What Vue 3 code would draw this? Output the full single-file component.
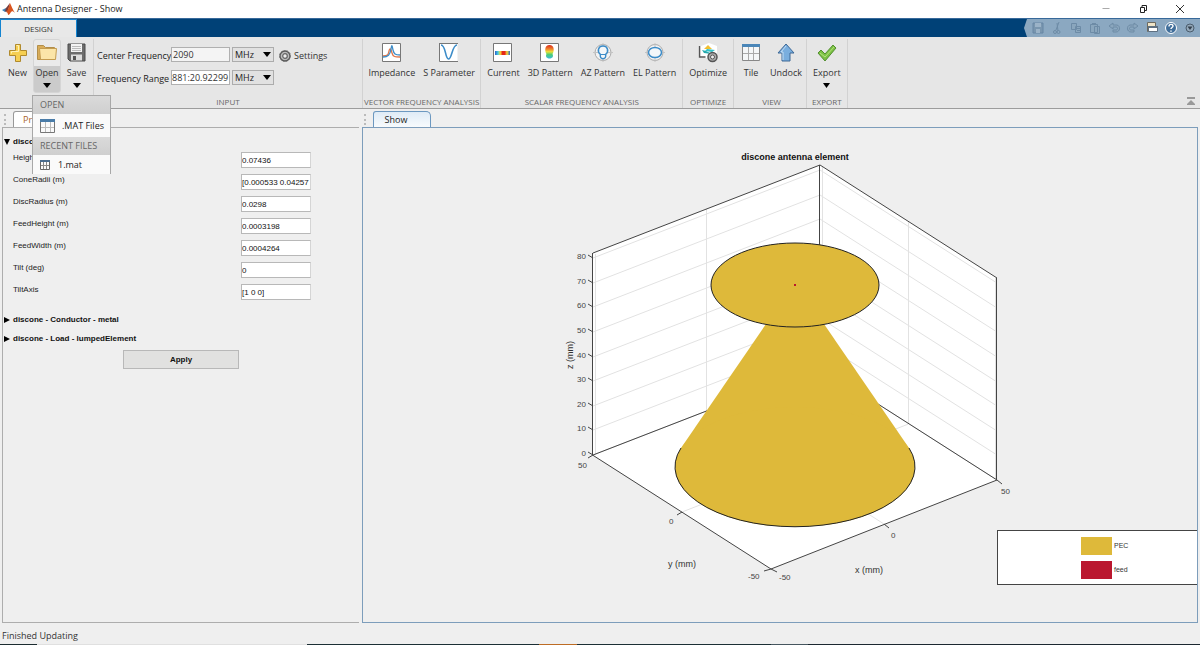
<script setup>
import { ref } from 'vue'

const centerFrequency = ref('2090')
const frequencyRange = ref('881:20.92299')

const properties = ref([
  { id: 'height', label: 'Height (m)', value: '0.07436' },
  { id: 'cone-radii', label: 'ConeRadii (m)', value: '[0.000533 0.04257' },
  { id: 'disc-radius', label: 'DiscRadius (m)', value: '0.0298' },
  { id: 'feed-height', label: 'FeedHeight (m)', value: '0.0003198' },
  { id: 'feed-width', label: 'FeedWidth (m)', value: '0.0004264' },
  { id: 'tilt', label: 'Tilt (deg)', value: '0' },
  { id: 'tilt-axis', label: 'TiltAxis', value: '[1 0 0]' }
])

// Height levels of the z axis, in millimetres, with their place on the left edge.
const levels = [0, 10, 20, 30, 40, 50, 60, 70, 80].map((mm) => ({
  mm,
  y: Math.round(455 - mm * 2.46)
}))
</script>

<template>
  <div class="window">
    <header class="titlebar">
      <svg class="logo" width="13" height="12" viewBox="0 0 13 12">
        <path d="M0 7 L4 5 L6 7 L3 9Z" fill="#3f7fb5" />
        <path d="M4 5 L8 0 L6 8 L4 9 L3 8Z" fill="#7a3b3b" />
        <path d="M8 0 C9 2 11 7 13 10 C11 8 10 8 9 9 C8 11 7 12 6 12 C6 10 5 9 4 9 C6 8 7 3 8 0Z" fill="#d9541e" />
      </svg>
      <span class="title">Antenna Designer - Show</span>
      <div class="window-controls">
        <button aria-label="Minimize"><svg width="10" height="10" viewBox="0 0 10 10"><path d="M1.500 4.500h7" stroke="#aaa" fill="none" /></svg></button>
        <button aria-label="Restore"><svg width="10" height="10" viewBox="0 0 10 10"><path d="M2.500 3.500h4v5h-4zM4 3V1.500h4.500v5H7" stroke="#222" fill="none" /></svg></button>
        <button aria-label="Close"><svg width="10" height="10" viewBox="0 0 10 10"><path d="M1 1l8 8M9 1l-8 8" stroke="#333" fill="none" /></svg></button>
      </div>
    </header>

    <nav class="tabstrip">
      <button class="design-tab">DESIGN</button>
      <div class="quick-access">
        <button aria-label="Save"><svg class="dim" width="14" height="14" viewBox="0 0 14 14"><path d="M2 2h10v10H2z" fill="#7591ab" stroke="#5f7f9c" /><path d="M4 2h6v4H4zM5 8h4v4H5z" fill="#9fb6ca" /></svg></button>
        <button aria-label="Cut"><svg class="dim" width="14" height="14" viewBox="0 0 14 14"><g fill="none" stroke="#66849f"><path d="M9 1L6 9M7 2l1 8" /><circle cx="5" cy="11" r="1.500" /><circle cx="8.500" cy="11" r="1.500" /></g></svg></button>
        <button aria-label="Copy"><svg class="dim" width="14" height="14" viewBox="0 0 14 14"><path d="M2.500 2.500h5v6h-5zM6.500 5.500h5v6h-5z" fill="#8aa5bc" stroke="#66849f" /><path d="M8 7.500h3M8 9.500h3" stroke="#66849f" /></svg></button>
        <button aria-label="Paste"><svg class="dim" width="14" height="14" viewBox="0 0 14 14"><path d="M2.500 3.500h7v8h-7zM6.500 5.500h5v7h-5z" fill="#8aa5bc" stroke="#66849f" /><path d="M4 2h4v2H4z" fill="#66849f" /></svg></button>
        <button aria-label="Undo"><svg class="dim" width="14" height="14" viewBox="0 0 14 14"><path d="M2 5l4-3v2h4c4 1 3 7-1 7H6V9h3c2 0 2-3 0-3H6v2z" fill="#8aa5bc" stroke="#66849f" /></svg></button>
        <button aria-label="Redo"><svg class="dim" width="14" height="14" viewBox="0 0 14 14"><path d="M12 5L8 2v2H4c-4 1-3 7 1 7h3V9H5c-2 0-2-3 0-3h3v2z" fill="#8aa5bc" stroke="#66849f" /></svg></button>
        <button aria-label="Switch windows"><svg width="14" height="14" viewBox="0 0 14 14"><path d="M2.500 1.500h8v9h-8z" fill="#eee4c8" stroke="#6d6a60" /><path d="M3.500 5.500h9v5h-9z" fill="#fff" stroke="#5d6f80" /><path d="M3 5h10v2H3z" fill="#5d6f80" /></svg></button>
        <button aria-label="Help"><svg width="14" height="14" viewBox="0 0 14 14"><circle cx="7" cy="7" r="5.500" fill="#416f9b" stroke="#fff" /><path d="M5 5.500c0-3 4-2.500 4-.5C9 6.500 7 6.500 7 8M7 9.500v1.200" fill="none" stroke="#fff" stroke-width="1.400" /></svg></button>
        <button aria-label="More"><svg width="14" height="14" viewBox="0 0 14 14"><circle cx="7" cy="7" r="4" fill="#94a9bb" stroke="#4a5c6c" /><path d="M4.500 5.500h5L7 9z" fill="#34424e" /></svg></button>
      </div>
    </nav>

    <section class="ribbon">
      <div class="group file-group">
        <div class="tools">
          <button class="tool">
            <svg width="20" height="20" viewBox="0 0 20 20"><path d="M7.500 1.500h5v6h6v5h-6v6h-5v-6h-6v-5h6z" fill="#f6cf52" stroke="#b08a2e" /><path d="M8.500 2.500h2v6h-7v2" fill="none" stroke="#fff2b8" /></svg>
            <span>New</span>
          </button>
          <button class="tool open">
            <svg width="20" height="20" viewBox="0 0 20 20"><path d="M.5 2.500h6l2 2h9v12H.5z" fill="#d9ad5a" stroke="#b28e4a" /><path d="M2.500 5.500h17l-1 11h-15z" fill="#fbe5a8" stroke="#c49c50" /></svg>
            <span>Open</span>
            <svg class="caret" width="8" height="5" viewBox="0 0 8 5"><path d="M0 0h8L4 5z" /></svg>
          </button>
          <button class="tool">
            <svg width="20" height="20" viewBox="0 0 20 20"><path d="M1 1h17v17H3l-2-2z" fill="#6c6c6c" stroke="#4b4b4b" /><path d="M4 1h11v8H4z" fill="#f4f4f4" /><path d="M5 3.500h9M5 5.500h9M5 7.500h9" stroke="#bbb" /><path d="M4 11.500h11v6H4z" fill="#ddd" /><path d="M6 13h3v4H6z" fill="#555" /></svg>
            <span>Save</span>
            <svg class="caret" width="8" height="5" viewBox="0 0 8 5"><path d="M0 0h8L4 5z" /></svg>
          </button>
        </div>
      </div>

      <div class="group input-group">
        <div class="input-body">
          <form class="frequency" @submit.prevent>
            <label for="center">Center Frequency</label>
            <input id="center" v-model="centerFrequency" class="muted" />
            <div class="unit">
              <select aria-label="Center frequency unit"><option>MHz</option><option>GHz</option></select>
              <svg width="8" height="5" viewBox="0 0 8 5"><path d="M0 0h8L4 5z" /></svg>
            </div>
            <label for="range">Frequency Range</label>
            <input id="range" v-model="frequencyRange" />
            <div class="unit">
              <select aria-label="Frequency range unit"><option>MHz</option><option>GHz</option></select>
              <svg width="8" height="5" viewBox="0 0 8 5"><path d="M0 0h8L4 5z" /></svg>
            </div>
          </form>
          <button class="settings">
            <svg width="12" height="12" viewBox="0 0 12 12"><circle cx="6" cy="6" r="5" fill="#bbb" stroke="#555" stroke-width="1.300" /><circle cx="6" cy="6" r="5.500" fill="none" stroke="#777" stroke-dasharray="1.500 1.500" /><circle cx="6" cy="6" r="2.300" fill="#eee" stroke="#666" stroke-width="1.200" /></svg>
            <span>Settings</span>
          </button>
        </div>
        <h2>INPUT</h2>
      </div>

      <div class="group">
        <div class="tools">
          <button class="tool">
            <svg width="20" height="20" viewBox="0 0 20 20"><path d="M.5.5h18v18H.5z" fill="#fff" stroke="#777" /><path d="M1 13c5 0 5-1 6-5s2-2 3 2 3 4 8 4" fill="none" stroke="#e0764a" stroke-width="1.300" /><path d="M1 14c5 0 7-2 8-8 1-6 1-3 2 1s2 5 7 5" fill="none" stroke="#3c8cc8" stroke-width="1.300" /></svg>
            <span>Impedance</span>
          </button>
          <button class="tool">
            <svg width="20" height="20" viewBox="0 0 20 20"><path d="M.5.5h18v18H.5z" fill="#fff" /><path d="M.5 0v18.500H19M1 .5h18" fill="none" stroke="#777" /><path d="M2 2c5 0 4 14 7.500 14S13 2 18 2" fill="none" stroke="#3c8cc8" stroke-width="1.600" /></svg>
            <span>S Parameter</span>
          </button>
        </div>
        <h2>VECTOR FREQUENCY ANALYSIS</h2>
      </div>

      <div class="group scalar-group">
        <div class="tools">
          <button class="tool">
            <svg width="20" height="20" viewBox="0 0 20 20"><defs><linearGradient id="current"><stop offset="0" stop-color="#2a62cc" /><stop offset=".2" stop-color="#48cde0" /><stop offset=".35" stop-color="#f4dc38" /><stop offset=".5" stop-color="#e52718" /><stop offset=".65" stop-color="#e52718" /><stop offset=".8" stop-color="#f4dc38" /><stop offset="1" stop-color="#2a62cc" /></linearGradient></defs><path d="M.5.5h18v18H.5z" fill="#fff" stroke="#777" /><path d="M2 8h15v4H2z" fill="url(#current)" /></svg>
            <span>Current</span>
          </button>
          <button class="tool">
            <svg width="20" height="20" viewBox="0 0 20 20"><defs><linearGradient id="lobe" x2="0" y2="1"><stop offset="0" stop-color="#d92a1c" /><stop offset=".3" stop-color="#f0822c" /><stop offset=".5" stop-color="#ecdf38" /><stop offset=".7" stop-color="#51ce70" /><stop offset="1" stop-color="#36b8dc" /></linearGradient></defs><path d="M.5.5h18v18H.5z" fill="#fff" stroke="#777" /><path d="M9.500 2c5 0 5 6 3 9 3 6-9 6-6 0-2-3-2-9 3-9z" fill="url(#lobe)" /></svg>
            <span>3D Pattern</span>
          </button>
          <button class="tool">
            <svg width="20" height="20" viewBox="0 0 20 20"><circle cx="10" cy="9.500" r="8" fill="#f3f3f3" stroke="#aaa" /><path d="M10 0v19M0 9.500h20" stroke="#c4c4c4" /><path d="M7.500 11.500C3.500 8 5.500 3 10 3s6.500 5 2.500 8.500c2 5.500-7 5.500-5 0z" fill="#f3f7fa" stroke="#3c8cc8" stroke-width="1.500" /><path d="M7.500 11.500h5" stroke="#3c8cc8" /></svg>
            <span>AZ Pattern</span>
          </button>
          <button class="tool">
            <svg width="20" height="20" viewBox="0 0 20 20"><circle cx="10" cy="9.500" r="8" fill="#f3f3f3" stroke="#aaa" /><path d="M10 0v19M0 9.500h20" stroke="#c4c4c4" /><ellipse cx="10" cy="9.500" rx="6.500" ry="5" fill="#f3f7fa" stroke="#3c8cc8" stroke-width="1.500" /></svg>
            <span>EL Pattern</span>
          </button>
        </div>
        <h2>SCALAR FREQUENCY ANALYSIS</h2>
      </div>

      <div class="group optimize-group">
        <div class="tools">
          <button class="tool">
            <svg width="20" height="20" viewBox="0 0 20 20"><path d="M3 3l8-3 8 3v12H3z" fill="#fff" /><path d="M1.500 3v11h6" fill="none" stroke="#555" stroke-width="1.300" /><path d="M4 7l4 1 6 3-8-1z" fill="#25a9ad" /><path d="M10 2l4 4H6z" fill="#f1bf32" /><path d="M9 6l8 1-3 2-7-1z" fill="#32c1c9" /><circle cx="14.500" cy="14" r="4.500" fill="#aaa" stroke="#555" stroke-width="1.500" /><circle cx="14.500" cy="14" r="2" fill="#eee" stroke="#555" /></svg>
            <span>Optimize</span>
          </button>
        </div>
        <h2>OPTIMIZE</h2>
      </div>

      <div class="group view-group">
        <div class="tools">
          <button class="tool">
            <svg width="20" height="20" viewBox="0 0 20 20"><path d="M1.500 1.500h17v16h-17z" fill="#f5f7f8" stroke="#888" /><path d="M1 1h18v3H1z" fill="#4a86b8" /><path d="M7.500 4v13M12.500 4v13M2 10.500h16" stroke="#aaa" /></svg>
            <span>Tile</span>
          </button>
          <button class="tool">
            <svg width="20" height="20" viewBox="0 0 20 20"><path d="M10 1l8 9h-4v8H6v-8H2z" fill="#79aede" stroke="#3e6896" /><path d="M10 3L5 9h2v8" fill="none" stroke="#c4ddf3" /></svg>
            <span>Undock</span>
          </button>
        </div>
        <h2>VIEW</h2>
      </div>

      <div class="group export-group">
        <div class="tools">
          <button class="tool">
            <svg width="20" height="20" viewBox="0 0 20 20"><path d="M1 10l3-3 4 4 8-9 3 3L8 18z" fill="#7bc142" stroke="#538f31" /><path d="M3 10l5 4 9-10" fill="none" stroke="#b3e07e" /></svg>
            <span>Export</span>
            <svg class="caret" width="7" height="5" viewBox="0 0 7 5"><path d="M0 0h7L3.500 5z" /></svg>
          </button>
        </div>
        <h2>EXPORT</h2>
      </div>

      <button class="collapse" aria-label="Collapse ribbon"><svg width="8" height="9" viewBox="0 0 8 9"><path d="M0 0h8v2H0zM4 3l4 4v1H0V7z" fill="#999" /></svg></button>

      <div class="open-menu">
        <h3>OPEN</h3>
        <button>
          <svg width="15" height="14" viewBox="0 0 15 14"><path d="M.5.500h14v13H.5z" fill="#fafafa" stroke="#777" /><path d="M0 0h15v3H0z" fill="#4a7ca8" /><path d="M5.500 3v10M10.500 3v10M1 8.500h13" stroke="#bbb" /></svg>
          .MAT Files
        </button>
        <h3>RECENT FILES</h3>
        <button class="recent">
          <svg width="10" height="10" viewBox="0 0 10 10"><path d="M.5.500h9v9H.5z" fill="#fafafa" stroke="#666" /><path d="M0 0h10v2H0z" fill="#4a6c8e" /><path d="M3.500 2v7M6.500 2v7M1 5.500h8" stroke="#888" /></svg>
          1.mat
        </button>
      </div>
    </section>

    <main class="workspace">
      <section class="pane properties-pane">
        <div class="pane-tabs"><i class="grip"></i><button class="pane-tab">Properties</button></div>
        <div class="pane-body">
          <form @submit.prevent>
            <button class="expander" type="button"><svg width="6" height="6" viewBox="0 0 6 6"><path d="M0 0h6L3 6z" /></svg>discone</button>
            <div class="fields">
              <div v-for="p in properties" :key="p.id" class="field">
                <label :for="p.id">{{ p.label }}</label>
                <input :id="p.id" v-model="p.value" />
              </div>
            </div>
            <button class="expander" type="button"><svg width="6" height="6" viewBox="0 0 6 6"><path d="M0 0v6l6-3z" /></svg>discone - Conductor - metal</button>
            <button class="expander" type="button"><svg width="6" height="6" viewBox="0 0 6 6"><path d="M0 0v6l6-3z" /></svg>discone - Load - lumpedElement</button>
            <button class="apply">Apply</button>
          </form>
        </div>
      </section>

      <section class="pane show-pane">
        <div class="pane-tabs"><i class="grip"></i><button class="pane-tab">Show</button></div>
        <div class="pane-body">
          <svg class="plot" viewBox="363 128 834 494">
            <path d="M593 253L820 165L997 278V480L771 569L593 455Z" fill="#fff" />
            <g class="grid">
              <path v-for="l in levels" :key="l.mm" :d="`M593 ${l.y}L820 ${l.y - 88}L997 ${l.y + 25}`" />
              <path d="M595.500 254V455M706.500 209V411L884 524M908.500 222V424L682 512M822.500 167V367M995.500 278V479" />
            </g>
            <g class="axis">
              <path d="M593 253L820 165L997 278M819.500 165V367M593 455L820 367L997 480M996.500 278V480M592.500 253V455L771 569L997 480" />
              <path v-for="l in levels" :key="l.mm" :d="`M593 ${l.y}l-5 -3`" />
              <path d="M593 455l-5 3M682 512l-5 3M771 569l-7 2M771 569l6 3M884 524l5 4M997 480l5 4" />
            </g>
            <path d="M766 324H824L909 448L911 480H678L681 448Z" fill="#deb93a" />
            <ellipse cx="795" cy="467" rx="120" ry="60" fill="#deb93a" />
            <path d="M681 448A120 60 0 1 0 909 448" class="outline" />
            <ellipse cx="795" cy="285" rx="84" ry="42" fill="#deb93a" class="rim" />
            <path d="M794 284h2v2h-2z" fill="#ba172f" />
            <g class="ticks">
              <text v-for="l in levels" :key="l.mm" x="586" :y="l.y + 1" text-anchor="end">{{ l.mm }}</text>
              <text x="578" y="468">50</text>
              <text x="669" y="524">0</text>
              <text x="748" y="579">-50</text>
              <text x="779" y="580">-50</text>
              <text x="891" y="538">0</text>
              <text x="1001" y="494">50</text>
            </g>
            <g class="axis-names">
              <text x="668" y="567">y (mm)</text>
              <text x="855" y="573">x (mm)</text>
              <text transform="translate(573 369) rotate(-90)">z (mm)</text>
            </g>
            <text class="plot-title" x="795" y="160" text-anchor="middle">discone antenna element</text>
          </svg>
          <ul class="legend">
            <li><i class="pec"></i>PEC</li>
            <li><i class="feed"></i>feed</li>
          </ul>
        </div>
      </section>
    </main>

    <footer class="status">Finished Updating</footer>
  </div>
</template>

<style>
html, body { margin: 0; }
</style>

<style scoped>
.window {
  display: flex;
  flex-direction: column;
  height: 100vh;
  overflow: hidden;
  background: #efefef;
  color: #333;
  font: 9px/12px "Open Sans", "Noto Sans", sans-serif;
}
.window * { box-sizing: border-box; }
button {
  margin: 0;
  padding: 0;
  border: 0;
  background: none;
  color: inherit;
  font: inherit;
}
svg { display: block; flex: none; }
h2, h3 { margin: 0; font-weight: 400; font-size: 8px; }

.titlebar {
  display: flex;
  align-items: center;
  flex: none;
  height: 18px;
  padding-left: 2px;
  background: #fff;
  color: #222;
}
.title { margin-left: 2px; }
.window-controls { display: flex; margin-left: auto; padding-right: 15px; gap: 27px; }

.tabstrip {
  display: flex;
  justify-content: space-between;
  flex: none;
  height: 19px;
  background: #004177;
  border-top: 1px solid #37699a;
}
.design-tab {
  width: 77px;
  border: 1px solid #1484d0;
  border-bottom: 0;
  background: #e8e8e8;
  font-size: 8px;
}
.quick-access {
  display: flex;
  align-items: center;
  gap: 5px;
  padding: 0 3px 0 7px;
  background: #8ba8c1;
  clip-path: polygon(3px 0, 100% 0, 100% 100%, 3px 100%, 0 50%);
}
.dim { opacity: 0.8; }

.ribbon {
  position: relative;
  display: flex;
  flex: none;
  height: 72px;
  background: #e6e6e6;
  border-bottom: 1px solid #9c9c9c;
}
.group {
  display: flex;
  flex-direction: column;
  justify-content: space-between;
  align-items: center;
  margin-top: 2px;
  padding: 0 5px;
  border-right: 1px solid #d2d2d2;
}
.group h2 { color: #666; margin: 0 -4px; line-height: 12px; white-space: nowrap; }
.file-group { width: 94px; padding: 0; align-items: flex-start; }
.file-group .tools { gap: 0; padding-left: 2px; }
.file-group .tool { width: 31px; }
.file-group .tool.open { width: 28px; }
.tools { display: flex; gap: 8px; }
.tool {
  display: flex;
  flex-direction: column;
  align-items: center;
  height: 54px;
  padding-top: 4px;
  white-space: nowrap;
}
.tool span { margin-top: 4px; }
.caret { margin-top: 4px; }
.open {
  border: 1px solid #d5d5d5;
  padding-top: 3px;
  border-radius: 3px;
  background: linear-gradient(#eaeaea 26px, #cbcbcb 26px);
}
.input-group { width: 269px; padding: 0 3px; }
.input-body { display: flex; align-items: flex-start; width: 100%; padding-top: 8px; }
.frequency { display: grid; grid-template-columns: 72px 59px 42px; column-gap: 2px; row-gap: 8px; align-items: center; }
.frequency label { white-space: nowrap; color: #222; padding-top: 2px; }
.frequency input {
  width: 100%;
  height: 15px;
  padding: 0 1px;
  border: 1px solid #b0b0b0;
  background: #fff;
  color: #333;
  font: inherit;
}
.frequency .muted { background: #f4f4f4; }
#range { padding: 0; }
.unit { position: relative; }
.unit select {
  display: block;
  width: 100%;
  height: 15px;
  padding: 0 2px;
  border: 1px solid #acacac;
  border-radius: 0;
  background: #e1e1e1;
  color: #222;
  font: inherit;
  appearance: none;
}
.unit svg { position: absolute; right: 3px; top: 5px; pointer-events: none; }
.settings { display: flex; align-items: center; gap: 3px; margin: 3px 0 0 5px; }
.scalar-group { padding: 0 6px; }
.optimize-group { padding: 0 6px; }
.view-group { padding: 0 4px 0 7px; }
.view-group .tools { gap: 9px; }
.export-group { padding: 0 6px; }
.collapse { margin: 60px 5px 0 auto; height: 9px; }

.open-menu {
  position: absolute;
  z-index: 2;
  left: 32px;
  top: 58px;
  width: 79px;
  border: 1px solid #a8a8a8;
  border-bottom: 0;
  background: #fafafa;
}
.open-menu h3 {
  height: 18px;
  padding-left: 7px;
  background: linear-gradient(#dadada, #cfcfcf);
  color: #666;
  font-size: 9px;
  line-height: 18px;
}
.open-menu button {
  display: flex;
  align-items: center;
  gap: 7px;
  width: 100%;
  height: 23px;
  padding-left: 7px;
  color: #222;
  white-space: nowrap;
}
.open-menu .recent { height: 19px; gap: 8px; }

.workspace { display: flex; flex: 1; min-height: 0; padding: 2px 2px 0 2px; }
.pane { display: flex; flex-direction: column; min-width: 0; }
.pane-tabs { display: flex; flex: none; height: 16px; padding-left: 2px; }
.grip { width: 2px; height: 11px; margin: 3px 7px 0 0; border-left: 2px dotted #bbb; }
.pane-tab {
  padding: 0 9px;
  border: 1px solid #999;
  border-bottom: 0;
  border-radius: 3px 5px 0 0;
  background: #fff;
  color: #222;
}
.pane-body { position: relative; flex: 1; min-height: 0; border: 1px solid #adadad; }
.properties-pane { flex: 0 0 30%; max-width: 357px; font-family: "Liberation Sans", sans-serif; }
.properties-pane .pane-tab { color: #a8642a; font: 9px/12px "Open Sans", sans-serif; }
.properties-pane .pane-body { border-right: 0; font-size: 8px; color: #222; }
.show-pane { flex: 1; margin-left: 3px; }
.show-pane .pane-tab { width: 58px; padding: 0 12px 0 0; border-color: #6c98c0; background: linear-gradient(#dfebf6, #f8fbfd); }
.show-pane .pane-body { border-color: #7d9dbb; }

.expander { display: flex; align-items: center; gap: 3px; height: 19px; padding-left: 1px; font-weight: 700; color: #111; }
.properties-pane form { display: flex; flex-direction: column; align-items: flex-start; padding-top: 4px; }
.fields { width: 100%; padding-bottom: 5px; }
.field { display: grid; grid-template-columns: 228px 70px; height: 22px; padding-left: 10px; align-items: start; }
.field label { line-height: 14px; }
.field input {
  width: 100%;
  height: 16px;
  margin-top: 1px;
  padding: 0;
  border: 1px solid #b8b8b8;
  border-right-color: #d5d5d5;
  background: #fff;
  font: 8px "Liberation Sans", sans-serif;
  color: #111;
}
.apply {
  align-self: center;
  width: 116px;
  height: 19px;
  margin-top: 2px;
  border: 1px solid #b8b8b8;
  background: #e1e1e0;
  color: #111;
  font-weight: 700;
}

.plot { width: 100%; height: 100%; font-family: "Liberation Sans", sans-serif; }
.grid path { fill: none; stroke: #e2e2e2; }
.axis path { fill: none; stroke: #444; }
.outline { fill: none; stroke: #222; }
.rim { stroke: #222; }
.ticks { font-size: 8px; fill: #444; }
.axis-names { font-size: 9px; fill: #333; }
.plot-title { font-size: 9px; font-weight: 700; fill: #111; }
.legend {
  position: absolute;
  right: 0;
  bottom: 37px;
  display: flex;
  flex-direction: column;
  gap: 6px;
  width: 200px;
  margin: 0;
  padding: 6px 0 5px 83px;
  border: 1px solid #444;
  border-right: 0;
  background: #fff;
  font: 7px/18px "Liberation Sans", sans-serif;
  list-style: none;
}
.legend li { display: flex; align-items: center; gap: 2px; }
.legend i { width: 31px; height: 18px; }
.pec { background: #deb93a; }
.feed { background: #ba172f; }

.status {
  flex: none;
  height: 22px;
  padding: 7px 2px 0;
  border-bottom: 1px solid;
  border-image: linear-gradient(90deg, #1c2c30 38px, #e0e0e0 38px, #e0e0e0 307px, #1c2f35 307px, #1c2f35 539px, #bd6c24 539px, #bd6c24 577px, #1c2f35 577px, #1c2f35 771px, #46565f 771px, #46565f 808px, #1c2830 808px) 1;
}
</style>
